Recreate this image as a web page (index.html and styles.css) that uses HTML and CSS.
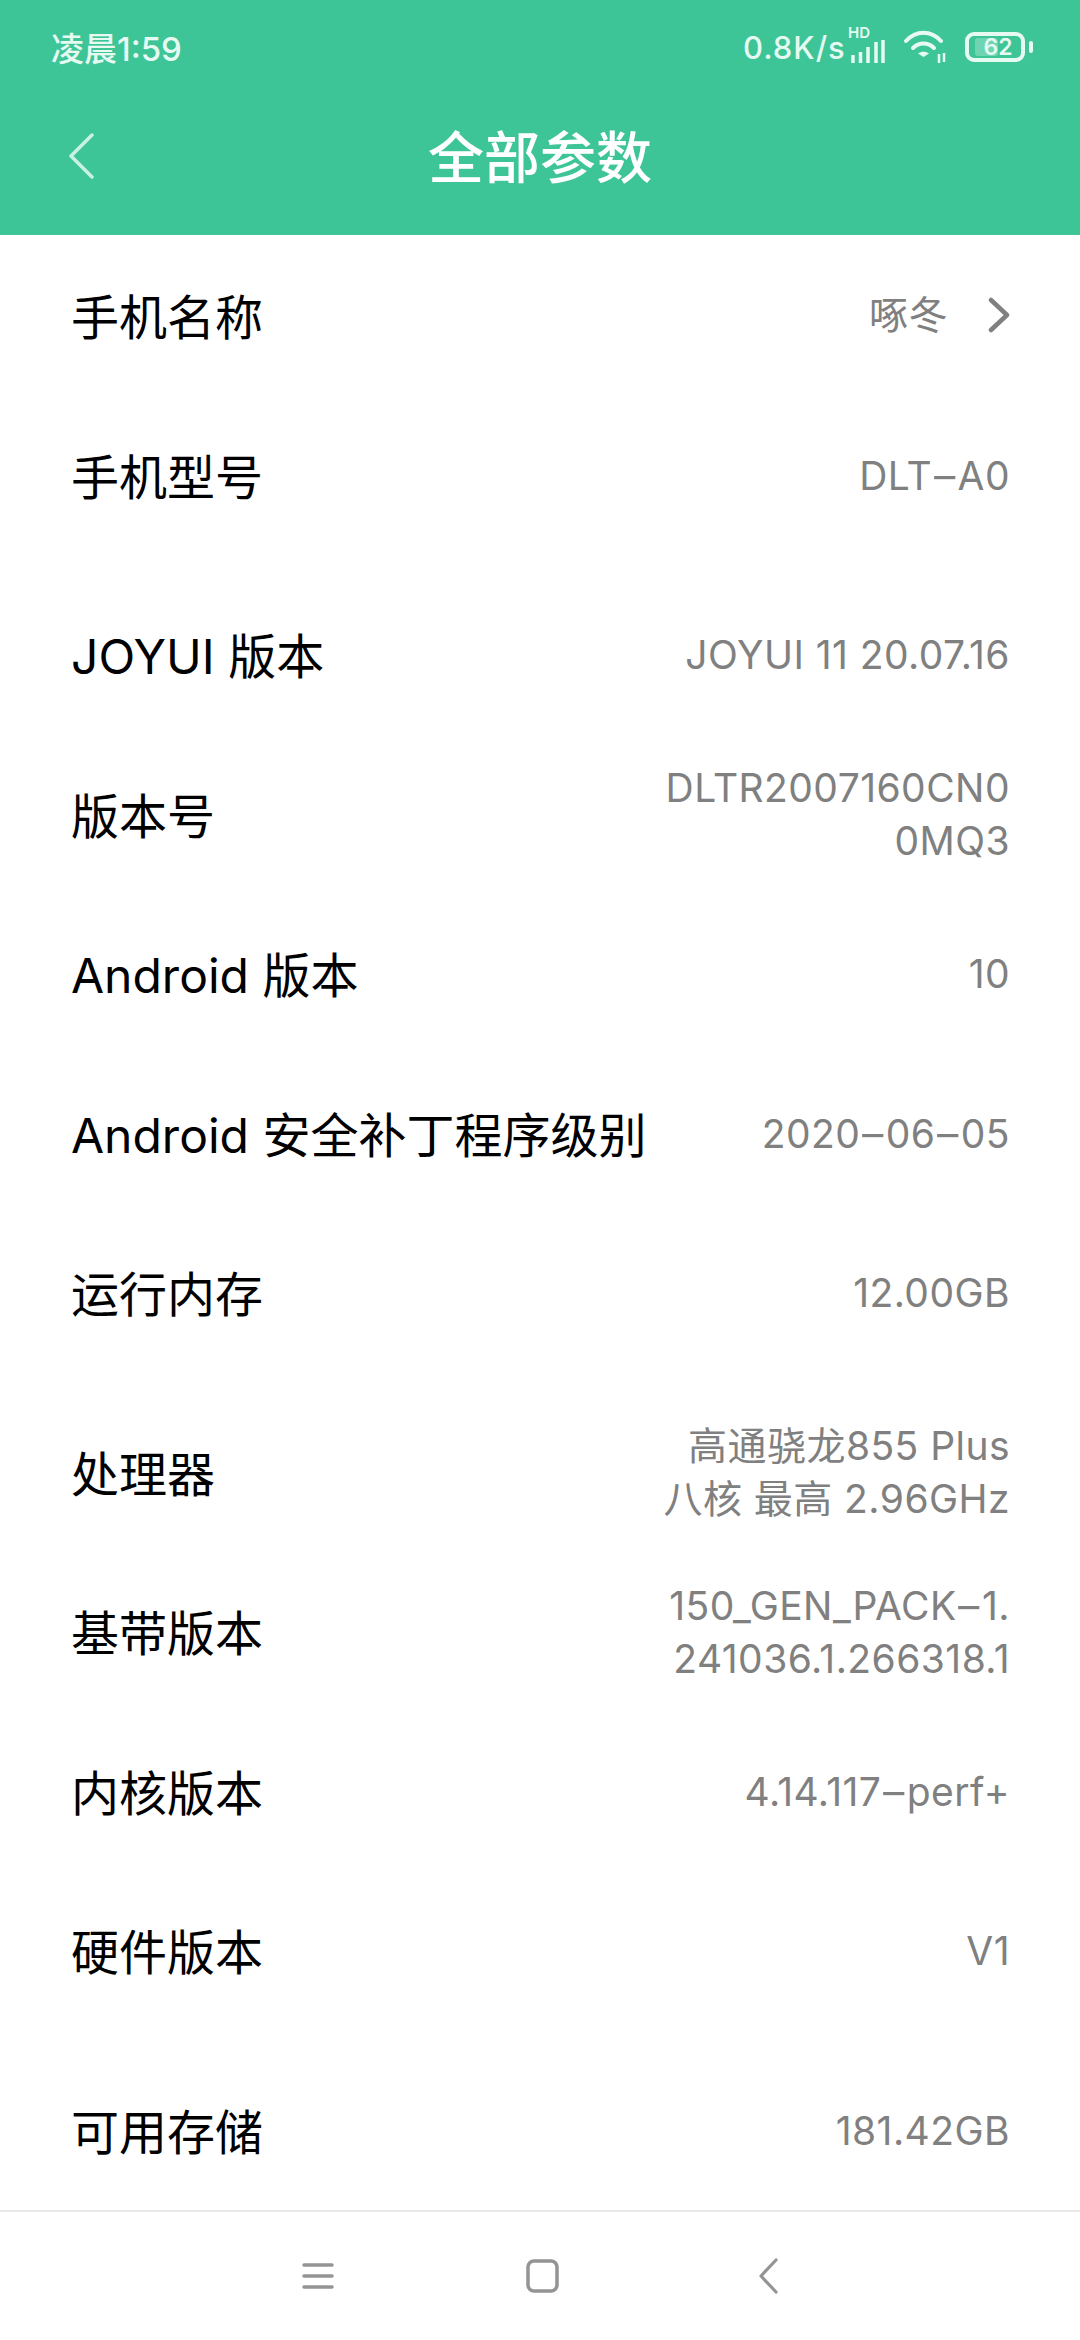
FILE: index.html
```html
<!DOCTYPE html>
<html lang="zh-CN">
<head>
    <meta charset="UTF-8">
    <meta name="viewport" content="width=device-width, initial-scale=1.0">
    <title>全部参数</title>
    <link rel="stylesheet" href="styles.css">
</head>
<body>
    <div class="phone">
        <!-- Green header with status bar -->
        <header class="header">
            <div class="status-bar">
                <span class="status-time">凌晨1:59</span>
                <div class="status-right">
                    <span class="status-speed">0.8K/s</span>
                    <div class="signal">
                        <span class="signal-hd">HD</span>
                        <svg class="signal-bars" width="34" height="24" viewBox="0 0 34 24">
                            <path d="M2 23V15M9.500 23V12M17 23V7M25 23V2M32 23V0" stroke="#e6faf2" stroke-width="3.500" fill="none"/>
                        </svg>
                    </div>
                    <svg class="wifi-icon" width="44" height="34" viewBox="0 0 44 34">
                        <path d="M2 11C12 0 27 0 37 11" stroke="#e6faf2" stroke-width="4" stroke-linecap="round" fill="none"/>
                        <path d="M9 18C15 12 24 12 30 18" stroke="#e6faf2" stroke-width="4" stroke-linecap="round" fill="none"/>
                        <path d="M14 23.500L19.500 27L25 23.500C22 21 17 21 14 23.500Z" fill="#e6faf2"/>
                        <path d="M35 24V33M40 23V32" stroke="#e6faf2" stroke-width="2.500" fill="none"/>
                    </svg>
                    <div class="battery">
                        <div class="battery-body">
                            <span class="battery-fill"></span>
                            <span class="battery-level">62</span>
                        </div>
                        <span class="battery-tip"></span>
                    </div>
                </div>
            </div>
            <div class="title-bar">
                <svg class="back-icon" width="30" height="46" viewBox="0 0 30 46">
                    <path d="M25 2L4 23L25 44" stroke="#c9f2e2" stroke-width="3.500" stroke-linecap="round" stroke-linejoin="round" fill="none"/>
                </svg>
                <h1 class="title">全部参数</h1>
            </div>
        </header>

        <!-- Parameter list -->
        <main class="params">
            <section class="group">
                <div class="row">
                    <span class="label">手机名称</span>
                    <span class="value value-link">啄冬
                        <svg class="chevron" width="22" height="36" viewBox="0 0 22 36">
                            <path d="M3 3L19 18L3 33" stroke="#808080" stroke-width="4.500" stroke-linecap="round" stroke-linejoin="round" fill="none"/>
                        </svg>
                    </span>
                </div>
                <div class="row">
                    <span class="label">手机型号</span>
                    <span class="value">DLT<span class="dash">-</span>A0</span>
                </div>
            </section>
            <section class="group">
                <div class="row">
                    <span class="label">JOYUI 版本</span>
                    <span class="value">JOYUI 11 20.07.16</span>
                </div>
                <div class="row">
                    <span class="label">版本号</span>
                    <span class="value">DLTR2007160CN0<br>0MQ3</span>
                </div>
                <div class="row">
                    <span class="label">Android 版本</span>
                    <span class="value">10</span>
                </div>
                <div class="row">
                    <span class="label">Android 安全补丁程序级别</span>
                    <span class="value">2020<span class="dash">-</span>06<span class="dash">-</span>05</span>
                </div>
                <div class="row">
                    <span class="label">运行内存</span>
                    <span class="value">12.00GB</span>
                </div>
            </section>
            <section class="group">
                <div class="row">
                    <span class="label">处理器</span>
                    <span class="value">高通骁龙855 Plus<br>八核 最高 2.96GHz</span>
                </div>
                <div class="row">
                    <span class="label">基带版本</span>
                    <span class="value">150_GEN_PACK<span class="dash">-</span>1.<br>241036.1.266318.1</span>
                </div>
                <div class="row">
                    <span class="label">内核版本</span>
                    <span class="value">4.14.117<span class="dash">-</span>perf+</span>
                </div>
                <div class="row">
                    <span class="label">硬件版本</span>
                    <span class="value">V1</span>
                </div>
            </section>
            <section class="group">
                <div class="row">
                    <span class="label">可用存储</span>
                    <span class="value">181.42GB</span>
                </div>
            </section>
        </main>

        <!-- Android navigation bar -->
        <nav class="nav-bar">
            <svg width="32" height="28" viewBox="0 0 32 28">
                <path d="M2 3H30M2 14H30M2 25H30" stroke="#949494" stroke-width="3.500" stroke-linecap="round" fill="none"/>
            </svg>
            <svg width="33" height="34" viewBox="0 0 33 34">
                <rect x="2" y="2" width="29" height="30" rx="6" stroke="#949494" stroke-width="3.500" fill="none"/>
            </svg>
            <svg class="nav-back" width="20" height="36" viewBox="0 0 20 36">
                <path d="M18 2L3 18L18 34" stroke="#949494" stroke-width="3.200" stroke-linecap="round" stroke-linejoin="round" fill="none"/>
            </svg>
        </nav>
    </div>
</body>
</html>
```

FILE: styles.css
```css
body {
    margin: 0;
    background-color: #ffffff;
    font-family: "Inter", "Noto Sans CJK SC", sans-serif;
}
.phone {
    width: 1080px;
    height: 2340px;
    display: flex;
    flex-direction: column;
    overflow: hidden;
}
.header {
    height: 235px;
    flex-shrink: 0;
    background-color: #3dc497;
    color: #e6faf2;
}
.status-bar {
    height: 94px;
    padding: 0 47px 0 51px;
    display: flex;
    align-items: center;
    justify-content: space-between;
}
.status-time {
    font-size: 33px;
    font-weight: 500;
}
.status-right {
    display: flex;
    align-items: center;
}
.status-speed {
    width: 100px;
    font-size: 31px;
    font-weight: 500;
    letter-spacing: 1px;
    white-space: nowrap;
}
.signal {
    position: relative;
    width: 39px;
    height: 34px;
    margin-left: 5px;
}
.signal-hd {
    position: absolute;
    top: -4px;
    left: 0;
    font-size: 15px;
    font-weight: 600;
    line-height: 14px;
}
.signal-bars {
    position: absolute;
    left: 3px;
    bottom: 0;
}
.wifi-icon {
    margin-left: 17px;
}
.battery {
    display: flex;
    align-items: center;
    margin-left: 17px;
}
.battery-body {
    position: relative;
    width: 52px;
    height: 22px;
    border: 4px solid #e6faf2;
    border-radius: 9px;
    display: flex;
    align-items: center;
    justify-content: center;
}
.battery-fill {
    position: absolute;
    top: 2px;
    bottom: 2px;
    left: 6px;
    width: 23px;
    background-color: rgba(230, 250, 242, 0.3);
    border-radius: 3px;
}
.battery-level {
    position: relative;
    left: 3px;
    font-size: 23px;
    font-weight: 600;
    line-height: 22px;
}
.battery-tip {
    width: 4px;
    height: 12px;
    margin-left: 4px;
    background-color: #e6faf2;
    border-radius: 2px;
}
.title-bar {
    position: relative;
    height: 125px;
    display: flex;
    align-items: center;
    justify-content: center;
}
.back-icon {
    position: absolute;
    left: 67px;
    top: 39px;
}
.title {
    margin: 0 0 7px 0;
    font-size: 56px;
    font-weight: 500;
    color: #ffffff;
}
.params {
    flex: 1;
    overflow: hidden;
}
.group {
    margin-bottom: 20px;
}
.row {
    height: 159.500px;
    padding: 0 70px 0 71px;
    display: flex;
    align-items: center;
    justify-content: space-between;
}
.label {
    padding-bottom: 1px;
    font-size: 48px;
    color: #000000;
    white-space: nowrap;
}
.value {
    padding-top: 2px;
    font-size: 39px;
    line-height: 53px;
    letter-spacing: 0.450px;
    color: #808080;
    text-align: right;
    white-space: nowrap;
}
.value-link {
    padding-top: 0;
    display: flex;
    align-items: center;
    gap: 40px;
}
/* the phone font has much longer hyphens */
.dash {
    display: inline-block;
    margin: 0 3.500px;
    transform: scaleX(1.7);
}
.nav-bar {
    height: 128px;
    flex-shrink: 0;
    border-top: 2px solid #e8e8e8;
    display: flex;
    align-items: center;
    justify-content: center;
    gap: 192px;
}
.nav-back {
    margin-left: 7px;
}
```
